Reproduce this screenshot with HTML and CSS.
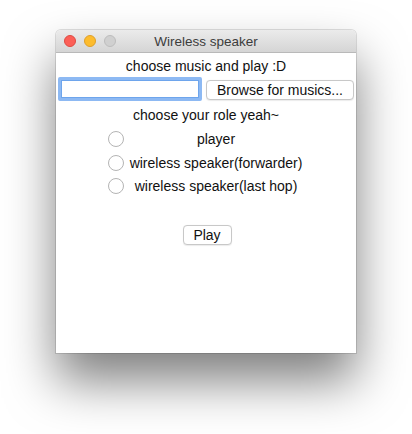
FILE: index.html
```html
<!DOCTYPE html>
<html>
<head>
<meta charset="utf-8">
<link rel="stylesheet" href="styles.css">
</head>
<body>
<div class="stage">
  <div class="window">
    <div class="titlebar">
      <div class="lights">
        <span class="light red"></span>
        <span class="light yellow"></span>
        <span class="light gray"></span>
      </div>
      <div class="title">Wireless speaker</div>
    </div>
    <div class="content">
      <div class="label first">choose music and play :D</div>
      <div class="filerow">
        <div class="field"></div>
        <div class="btn browse">Browse for musics...</div>
      </div>
      <div class="label second">choose your role yeah~</div>
      <div class="radios">
        <div class="radio"><span class="circle"></span><span class="rlabel">player</span></div>
        <div class="radio"><span class="circle"></span><span class="rlabel">wireless speaker(forwarder)</span></div>
        <div class="radio"><span class="circle"></span><span class="rlabel">wireless speaker(last hop)</span></div>
      </div>
      <div class="playrow"><div class="btn play">Play</div></div>
    </div>
  </div>
</div>
</body>
</html>
```
FILE: styles.css
```css
html, body {
  margin: 0;
  padding: 0;
  background: #ffffff;
}
body {
  font-family: "Liberation Sans", Arial, sans-serif;
  font-size: 14px;
  color: #111111;
}
.stage {
  padding: 30px 0 81px 56px;
}
.window {
  width: 300px;
  height: 323px;
  background: #ffffff;
  box-shadow: 0 28px 50px rgba(0, 0, 0, 0.5), 0 0 0 1px rgba(0, 0, 0, 0.12);
  border-radius: 5px 5px 0 0;
  display: flex;
  flex-direction: column;
}
.titlebar {
  height: 23px;
  background: linear-gradient(#ebebeb, #d5d5d5);
  border-bottom: 1px solid #b9b9b9;
  border-radius: 5px 5px 0 0;
  display: flex;
  align-items: center;
  position: relative;
  box-sizing: border-box;
}
.lights {
  display: flex;
  gap: 8px;
  padding-left: 8px;
}
.light {
  width: 12px;
  height: 12px;
  border-radius: 50%;
  box-sizing: border-box;
}
.red { background: #fc5f57; border: 0.5px solid #de4a42; }
.yellow { background: #fdbc2e; border: 0.5px solid #dfa02a; }
.gray { background: #d0d0d0; border: 0.5px solid #bdbdbd; }
.title {
  position: absolute;
  left: 0;
  right: 0;
  top: 0;
  line-height: 23px;
  text-align: center;
  color: #3c3c3c;
  font-size: 13.5px;
  pointer-events: none;
}
.content {
  display: flex;
  flex-direction: column;
  padding: 0 2px;
}
.label {
  text-align: center;
  line-height: 16px;
}
.first { margin-top: 5px; }
.filerow {
  display: flex;
  align-items: flex-start;
  margin-top: 3px;
  gap: 4px;
}
.field {
  width: 144px;
  height: 24px;
  box-sizing: border-box;
  border: 3px solid #8db9f3;
  border-radius: 2px;
  background: #fff;
  box-shadow: inset 0 0 0 1px #6ea5ec;
}
.btn {
  box-sizing: border-box;
  border: 1px solid #c8c8c8;
  border-radius: 4px;
  background: #ffffff;
  text-align: center;
  box-shadow: 0 0.5px 1px rgba(0, 0, 0, 0.08);
}
.browse {
  width: 148px;
  height: 20px;
  line-height: 18px;
  margin-top: 3px;
}
.second { margin-top: 6px; }
.radios {
  display: flex;
  flex-direction: column;
  gap: 7.5px;
  margin-top: 8px;
  padding-left: 50px;
}
.radio {
  display: flex;
  align-items: center;
  height: 16px;
}
.circle {
  width: 16px;
  height: 16px;
  box-sizing: border-box;
  border: 1px solid #b4b4b4;
  border-radius: 50%;
  background: #fff;
  flex: none;
}
.rlabel {
  width: 178px;
  margin-left: 3px;
  text-align: center;
  white-space: nowrap;
}
.playrow {
  display: flex;
  justify-content: center;
  margin-top: 31px;
}
.play {
  width: 49px;
  height: 20px;
  line-height: 18px;
  margin-left: 2px;
}
```
